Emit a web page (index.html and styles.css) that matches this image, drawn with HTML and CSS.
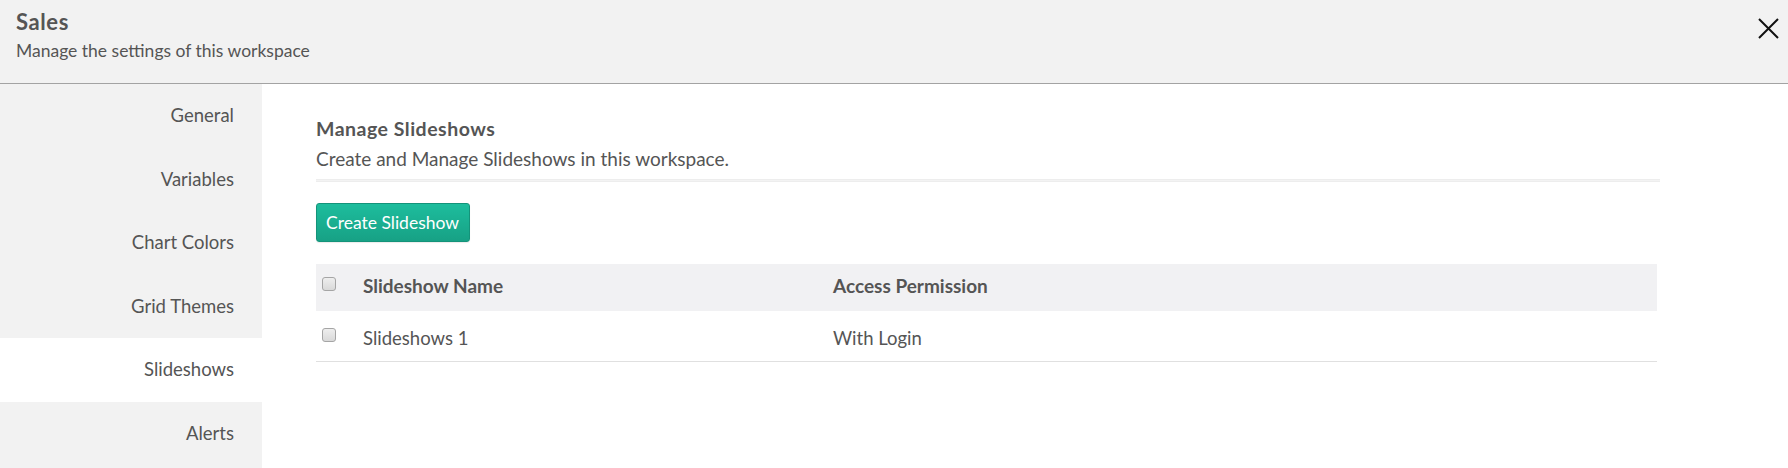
FILE: index.html
```html
<!DOCTYPE html>
<html>
<head>
<meta charset="utf-8">
<title>Sales - Workspace Settings</title>
<link rel="stylesheet" href="styles.css">
</head>
<body>
<header class="top">
  <div class="top-text">
    <h1 class="top-title">Sales</h1>
    <p class="top-sub">Manage the settings of this workspace</p>
  </div>
  <button class="close" aria-label="Close">
    <svg width="21" height="21" viewBox="0 0 21 21"><path d="M1 1 L20 20 M20 1 L1 20" stroke="#111" stroke-width="2" fill="none"/></svg>
  </button>
</header>
<div class="body">
  <nav class="side">
    <a class="side-item">General</a>
    <a class="side-item">Variables</a>
    <a class="side-item">Chart Colors</a>
    <a class="side-item">Grid Themes</a>
    <a class="side-item active">Slideshows</a>
    <a class="side-item">Alerts</a>
  </nav>
  <main class="main">
    <div class="content">
      <h2 class="sec-title">Manage Slideshows</h2>
      <p class="sec-sub">Create and Manage Slideshows in this workspace.</p>
      <div class="sep"></div>
      <button class="btn">Create Slideshow</button>
      <div class="table">
        <div class="row head">
          <div class="cell chk"><input type="checkbox" class="cb"></div>
          <div class="cell">Slideshow Name</div>
          <div class="cell">Access Permission</div>
        </div>
        <div class="row item">
          <div class="cell chk"><input type="checkbox" class="cb"></div>
          <div class="cell">Slideshows 1</div>
          <div class="cell">With Login</div>
        </div>
      </div>
    </div>
  </main>
</div>
</body>
</html>
```
FILE: styles.css
```css
* { box-sizing: border-box; }
html, body { margin: 0; padding: 0; }
body {
  height: 468px;
  display: flex;
  flex-direction: column;
  font-family: "Lato", "Liberation Sans", sans-serif;
  color: #555;
  background: #fff;
  overflow: hidden;
}
.top {
  flex: none;
  height: 84px;
  background: #f2f2f2;
  border-bottom: 1px solid #a3a3a3;
  display: flex;
  justify-content: space-between;
  align-items: flex-start;
  padding: 8px 9px 0 16px;
}
.top-title {
  margin: 0;
  font-size: 22px;
  line-height: 27px;
  font-weight: 700;
  letter-spacing: 0.6px;
  color: #555;
}
.top-sub {
  margin: 5px 0 0;
  font-size: 17.5px;
  line-height: 22px;
  color: #555;
}
.close {
  margin-top: 10px;
  padding: 0;
  border: 0;
  background: none;
  width: 21px;
  height: 21px;
  display: block;
}
.close svg { display: block; }
.body {
  flex: 1;
  display: flex;
  min-height: 0;
}
.side {
  flex: none;
  width: 262px;
  background: #f2f2f2;
  display: flex;
  flex-direction: column;
}
.side-item {
  height: 63.5px;
  line-height: 63.5px;
  text-align: right;
  padding-right: 28px;
  font-size: 18.5px;
  color: #555;
}
.side-item.active { background: #fff; }
.main {
  flex: 1;
  padding: 33px 0 0 54px;
}
.content { width: 1344px; }
.sec-title {
  margin: 0;
  font-size: 19.5px;
  line-height: 24px;
  font-weight: 700;
  letter-spacing: 0.5px;
  color: #555;
}
.sec-sub {
  margin: 6px 0 0;
  font-size: 19px;
  line-height: 24px;
  color: #555;
}
.sep {
  margin-top: 8px;
  height: 3px;
  background: #f3f3f3;
  border-top: 1px solid #ededed;
  border-bottom: 1px solid #ededed;
}
.btn {
  margin-top: 21px;
  display: block;
  height: 39px;
  padding: 0 10px 0 9px;
  border: 1px solid #14937a;
  border-radius: 3px;
  background: linear-gradient(#1dbd9d, #17a185);
  color: #fff;
  font-family: "Lato", "Liberation Sans", sans-serif;
  font-size: 17.5px;
  line-height: 37px;
  box-shadow: 0 1px 1px rgba(0,0,0,0.08);
}
.table {
  margin-top: 22px;
  width: 1341px;
}
.row {
  display: grid;
  grid-template-columns: 47px 470px 1fr;
  align-items: start;
}
.row.head {
  height: 47px;
  background: #f1f1f3;
  padding-top: 10px;
  font-weight: 700;
  font-size: 19px;
  line-height: 24px;
}
.row.item {
  height: 51px;
  padding-top: 15px;
  border-bottom: 1px solid #e0e0e0;
  font-size: 18.5px;
  line-height: 24px;
}
.cell.chk { padding-left: 6px; }
.cb {
  appearance: none;
  -webkit-appearance: none;
  display: block;
  margin: 0;
  width: 14px;
  height: 14px;
  border: 1px solid #a5a5a5;
  border-radius: 3px;
  background: linear-gradient(#eeeeee, #d9d9d9);
}
.head .cb { margin-top: 3px; }
.item .cb { margin-top: 2px; }
```
